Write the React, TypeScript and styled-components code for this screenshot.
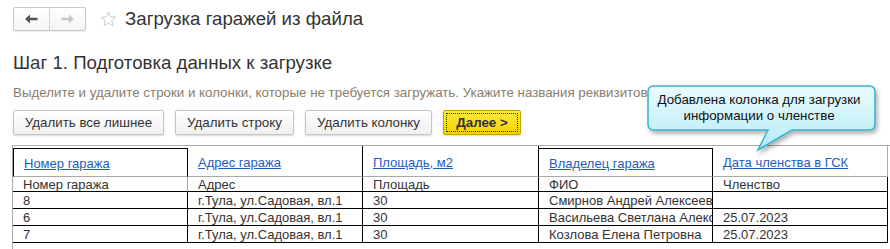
import React from "react";
import styled, { createGlobalStyle, css } from "styled-components";

const Global = createGlobalStyle`
  html, body { margin: 0; padding: 0; background: #fff; }
  body { font-family: "Liberation Sans", Arial, sans-serif; color: #333; overflow: hidden; }
`;

/* ─── Layout ─────────────────────────────────────────── */
const Page = styled.div`
  position: relative;
  width: 890px;
  height: 249px;
  padding: 7px 0 0 12px;
  box-sizing: border-box;
  overflow: hidden;
`;

const TopBar = styled.div`
  display: flex;
  align-items: center;
  height: 24px;
  margin-left: 1px;
`;

const NavGroup = styled.div`
  display: flex;
  height: 24px;
  border: 1px solid #c9c9c9;
  border-radius: 2px;
  box-sizing: border-box;
  background: linear-gradient(#fff, #f4f4f4);
  box-shadow: 0 1px 1px rgba(0, 0, 0, 0.08);
`;

const NavButton = styled.div<{ $last?: boolean }>`
  width: 35px;
  display: flex;
  align-items: center;
  justify-content: center;
  ${(p) => !p.$last && css`border-right: 1px solid #d4d4d4;`}
`;

const Star = styled.div`
  margin-left: 14px;
  display: flex;
  align-items: center;
`;

const Title = styled.div`
  margin-left: 8px;
  font-size: 18.67px;
  color: #333;
  line-height: 24px;
`;

const StepTitle = styled.div`
  margin: 21px 0 0 1px;
  font-size: 18.67px;
  line-height: 22px;
  color: #333;
`;

const Hint = styled.div`
  margin: 11px 0 0 1px;
  font-size: 13.33px;
  line-height: 16px;
  color: #8a7e6b;
  white-space: nowrap;
`;

const Buttons = styled.div`
  display: flex;
  gap: 11px;
  margin: 9px 0 0 1px;
`;

const Button = styled.div<{ $primary?: boolean; $w: number }>`
  width: ${(p) => p.$w}px;
  height: 25px;
  box-sizing: border-box;
  display: flex;
  align-items: center;
  justify-content: center;
  font-size: 13.33px;
  color: #333;
  border: 1px solid #c6c6c6;
  border-radius: 2px;
  background: linear-gradient(#ffffff, #f0f0f0);
  box-shadow: 0 1px 2px rgba(0, 0, 0, 0.15);
  ${(p) =>
    p.$primary &&
    css`
      position: relative;
      font-weight: bold;
      border-color: #c3a500;
      background: linear-gradient(#fde93f, #f3d300);
      &::after {
        content: "";
        position: absolute;
        inset: 2px;
        border: 1px dotted #333;
      }
    `}
`;

/* ─── Spreadsheet ────────────────────────────────────── */
const Sheet = styled.div`
  margin-top: 10px;
  border-top: 1px solid #a9a9a9;
  border-left: 1px solid #a9a9a9;
  height: 120px;
  display: grid;
  grid-template-columns: 175px 175px 176px 174px 175px;
  grid-auto-rows: min-content;
  align-content: start;
`;

const GRAY = "#a9a9a9";

const Cell = styled.div<{
  $h: number;
  $right?: string;
  $bottom?: string;
  $boxed?: boolean;
  $first?: boolean;
}>`
  height: ${(p) => p.$h}px;
  box-sizing: border-box;
  padding-left: 10px;
  font-size: 13px;
  line-height: 15px;
  color: #333;
  white-space: nowrap;
  overflow: hidden;
  display: flex;
  align-items: center;
  border-right: 1px solid ${(p) => p.$right ?? "#000"};
  border-bottom: 1px solid ${(p) => p.$bottom ?? "#000"};
  ${(p) =>
    p.$boxed &&
    css`
      border-top: 1px solid #000;
      margin-top: 2px;
      height: ${p.$h - 2}px;
    `}
  ${(p) =>
    p.$first &&
    p.$boxed &&
    css`
      border-left: 1px solid #000;
    `}
`;

const HeadLink = styled.a`
  color: #1f5cbf;
  text-decoration: underline;
  padding-top: 2px;
`;

/* ─── Callout ────────────────────────────────────────── */
const Callout = styled.div`
  position: absolute;
  left: 644px;
  top: 83px;
  width: 240px;
  height: 74px;
`;

const CalloutText = styled.div`
  position: absolute;
  left: 1px;
  top: 9px;
  width: 228px;
  text-align: center;
  font-size: 13.33px;
  line-height: 16px;
  color: #111;
`;

const heads = [
  { text: "Номер гаража", boxed: true },
  { text: "Адрес гаража" },
  { text: "Площадь, м2" },
  { text: "Владелец гаража", boxed: true },
  { text: "Дата членства в ГСК", last: true },
];

const subHeads = ["Номер гаража", "Адрес", "Площадь", "ФИО", "Членство"];

const rows = [
  ["8", "г.Тула, ул.Садовая, вл.1", "30", "Смирнов Андрей Алексеевич", ""],
  ["6", "г.Тула, ул.Садовая, вл.1", "30", "Васильева Светлана Алексеевна", "25.07.2023"],
  ["7", "г.Тула, ул.Садовая, вл.1", "30", "Козлова Елена Петровна", "25.07.2023"],
];

export default function App() {
  return (
    <>
      <Global />
      <Page>
        <TopBar>
          <NavGroup>
            <NavButton>
              <svg width="13" height="10" viewBox="0 0 13 10">
                <path d="M0 5 L5 0.5 V3.8 H12.5 V6.2 H5 V9.5 Z" fill="#555" />
              </svg>
            </NavButton>
            <NavButton $last>
              <svg width="13" height="10" viewBox="0 0 13 10">
                <path d="M13 5 L8 0.5 V3.8 H0.5 V6.2 H8 V9.5 Z" fill="#c8c8c8" />
              </svg>
            </NavButton>
          </NavGroup>
          <Star>
            <svg width="17" height="16" viewBox="0 0 24 23">
              <path
                d="M12 1.5 L14.9 8.4 L22.4 9 L16.7 13.9 L18.5 21.2 L12 17.3 L5.5 21.2 L7.3 13.9 L1.6 9 L9.1 8.4 Z"
                fill="none"
                stroke="#c4c4c4"
                strokeWidth="1.3"
                strokeLinejoin="round"
              />
            </svg>
          </Star>
          <Title>Загрузка гаражей из файла</Title>
        </TopBar>

        <StepTitle>Шаг 1. Подготовка данных к загрузке</StepTitle>
        <Hint>
          Выделите и удалите строки и колонки, которые не требуется загружать. Укажите названия реквизитов для
          загружаемых данных.
        </Hint>

        <Buttons>
          <Button $w={151}>Удалить все лишнее</Button>
          <Button $w={119}>Удалить строку</Button>
          <Button $w={127}>Удалить колонку</Button>
          <Button $w={78} $primary>
            Далее &gt;
          </Button>
        </Buttons>

        <Sheet>
          {heads.map((h, i) => (
            <Cell
              key={"h" + i}
              $h={31}
              $boxed={h.boxed}
              $first={i === 0}
              $right={h.last ? GRAY : "#000"}
              $bottom={GRAY}
            >
              <HeadLink>{h.text}</HeadLink>
            </Cell>
          ))}
          {subHeads.map((t, i) => (
            <Cell key={"s" + i} $h={15} $right={i === 0 ? GRAY : "#000"}>
              {t}
            </Cell>
          ))}
          {rows.map((r, ri) =>
            r.map((t, ci) => (
              <Cell key={ri + "-" + ci} $h={17}>
                {t}
              </Cell>
            ))
          )}
        </Sheet>

        <Callout>
          <svg width="240" height="74" viewBox="0 0 240 74">
            <defs>
              <linearGradient id="cg" x1="0" y1="0" x2="0" y2="1">
                <stop offset="0" stopColor="#eafcff" />
                <stop offset="1" stopColor="#b5eaf6" />
              </linearGradient>
              <filter id="sh" x="-10%" y="-10%" width="130%" height="140%">
                <feDropShadow dx="2" dy="3" stdDeviation="2" floodColor="#000" floodOpacity="0.3" />
              </filter>
            </defs>
            <path
              d="M10 3 H225 Q231 3 231 9 V41 Q231 47 225 47 H148 L114 67 L124 47 H10 Q4 47 4 41 V9 Q4 3 10 3 Z"
              fill="url(#cg)"
              stroke="#35b2cf"
              strokeWidth="1.5"
              filter="url(#sh)"
            />
          </svg>
          <CalloutText>
            Добавлена колонка для загрузки
            <br />
            информации о членстве
          </CalloutText>
        </Callout>
      </Page>
    </>
  );
}
